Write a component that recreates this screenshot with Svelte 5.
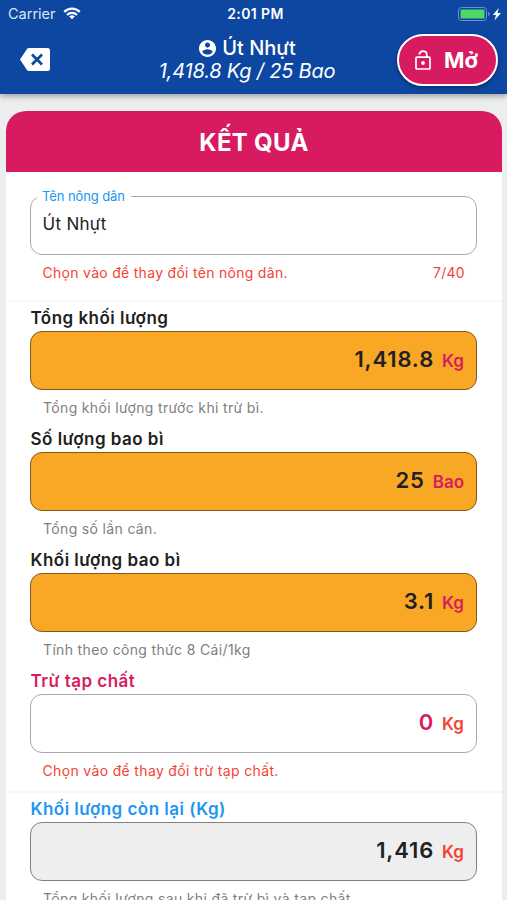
<script lang="ts">
	type Row = {
		label: string;
		value: string;
		unit: string;
		helper: string;
		kind: "amber" | "editable" | "total";
	};

	const farmer = "Út Nhựt";
	const maxLength = 40;

	const rows: Row[] = [
		{ label: "Tổng khối lượng", value: "1,418.8", unit: "Kg", helper: "Tổng khối lượng trước khi trừ bì.", kind: "amber" },
		{ label: "Số lượng bao bì", value: "25", unit: "Bao", helper: "Tổng số lần cân.", kind: "amber" },
		{ label: "Khối lượng bao bì", value: "3.1", unit: "Kg", helper: "Tính theo công thức 8 Cái/1kg", kind: "amber" },
		{ label: "Trừ tạp chất", value: "0", unit: "Kg", helper: "Chọn vào để thay đổi trừ tạp chất.", kind: "editable" },
		{ label: "Khối lượng còn lại (Kg)", value: "1,416", unit: "Kg", helper: "Tổng khối lượng sau khi đã trừ bì và tạp chất.", kind: "total" },
	];
</script>

<div class="screen">
	<header>
		<div class="status-bar">
			<div class="carrier">
				<span>Carrier</span>
				<svg width="18" height="13" viewBox="0 0 18 13" fill="none" stroke="#fff" stroke-width="2.2">
					<path d="M1.2 4.9a11 11 0 0 1 15.6 0" />
					<path d="M4 7.9a7 7 0 0 1 10 0" />
					<path d="M9 12.3 6.2 9.6a4 4 0 0 1 5.6 0z" fill="#fff" stroke="none" />
				</svg>
			</div>
			<span class="time">2:01 PM</span>
			<div class="power">
				<svg width="44" height="14" viewBox="0 0 44 14">
					<rect x=".5" y=".5" width="28" height="13" rx="3" fill="none" stroke="#6f91c8" />
					<rect x="2.5" y="2.5" width="24" height="9" rx="1.2" fill="#4cd964" />
					<path d="M30 5v4q1.7-.6 1.7-2T30 5z" fill="#6f91c8" />
					<path d="M40.8 1 34.8 7.9h3.2l-1.500 5.500 6.500-7.400h-3.500z" fill="#fff" />
				</svg>
			</div>
		</div>
		<div class="toolbar">
			<button class="back" aria-label="Xóa">
				<svg width="30" height="23" viewBox="0 0 30 23">
					<path d="M9 0h18.500Q30 0 30 2.500v18q0 2.500-2.500 2.500H9q-1.400 0-2.200-1.200L0 11.500 6.800 1.200Q7.600 0 9 0z" fill="#fff" />
					<path d="m12 6.500 10 10M22 6.500l-10 10" stroke="#0d47a1" stroke-width="2.600" />
				</svg>
			</button>
			<div class="title">
				<div class="name">
					<svg width="20" height="20" viewBox="2 2 20 20" fill="#fff">
						<path d="M12 2C6.480 2 2 6.480 2 12s4.480 10 10 10 10-4.480 10-10S17.520 2 12 2zm0 3c1.660 0 3 1.340 3 3s-1.340 3-3 3-3-1.340-3-3 1.340-3 3-3zm0 14.200c-2.500 0-4.710-1.280-6-3.220.03-1.990 4-3.080 6-3.080 1.990 0 5.970 1.090 6 3.080-1.290 1.940-3.500 3.220-6 3.220z" />
					</svg>
					<span>{farmer}</span>
				</div>
				<div class="summary">1,418.8 Kg / 25 Bao</div>
			</div>
			<button class="open">
				<svg width="16" height="20" viewBox="0 0 16 20" fill="none" stroke="#fff" stroke-width="1.7">
					<rect x="1" y="7.200" width="14" height="11.800" rx="1" />
					<path d="M4.200 4.500C4.700 2.300 6.100 1.200 8 1.200c2.200 0 3.800 1.500 3.800 3.800v2.200" />
					<circle cx="8" cy="13" r="1.900" fill="#fff" stroke="none" />
				</svg>
				<span>Mở</span>
			</button>
		</div>
	</header>

	<main>
		<h1>KẾT QUẢ</h1>
		<div class="farmer">
			<fieldset>
				<legend>Tên nông dân</legend>
				{farmer}
			</fieldset>
			<div class="hint">
				<span>Chọn vào để thay đổi tên nông dân.</span>
				<span>{farmer.length}/{maxLength}</span>
			</div>
		</div>
		{#each rows as row, i}
			{#if i === 0 || row.kind === "total"}
				<hr />
			{/if}
			<section class={row.kind}>
				<h2>{row.label}</h2>
				<div class="box">
					<span class="value">{row.value}</span>
					<span class="unit">{row.unit}</span>
				</div>
				<p>{row.helper}</p>
			</section>
		{/each}
	</main>
</div>

<style>
	:global(body) {
		background: #eceeee;
	}
	.screen {
		height: 900px;
		overflow: hidden;
		font-family: Inter, "Liberation Sans", sans-serif;
		background: #eceeee;
		color: #212121;
	}
	header {
		height: 94px;
		background: #0d47a1;
		box-shadow: 0 2px 6px rgba(0, 0, 0, 0.35);
		color: #fff;
	}
	.status-bar {
		display: grid;
		grid-template-columns: 1fr auto 1fr;
		align-items: center;
		height: 27px;
		padding: 0 5px 0 8px;
		font-size: 14.5px;
	}
	.carrier {
		display: flex;
		align-items: center;
		gap: 7px;
		color: #dde5f2;
	}
	.time {
		padding-left: 1px;
		font-size: 14px;
		font-weight: 600;
		letter-spacing: 0.4px;
	}
	.power {
		display: flex;
		justify-content: flex-end;
	}
	.toolbar {
		display: grid;
		grid-template-columns: 100px 1fr 101px;
		padding: 0 9px 0 20px;
		height: 67px;
	}
	button {
		display: flex;
		align-items: center;
		border: 0;
		padding: 0;
		background: none;
		font: inherit;
		color: #fff;
	}
	.back {
		height: 65px;
	}
	.title {
		display: flex;
		flex-direction: column;
		align-items: center;
		padding: 9px 23px 0 0;
		font-size: 20px;
		line-height: 24px;
		white-space: nowrap;
	}
	.name {
		display: flex;
		align-items: center;
		gap: 6px;
		padding-left: 1px;
		font-weight: 500;
	}
	.name svg {
		width: 17px;
		height: 17px;
	}
	.summary {
		margin-top: -1px;
		font-style: italic;
		letter-spacing: -0.2px;
	}
	.open {
		justify-content: center;
		gap: 13px;
		height: 52px;
		margin-top: 7px;
		padding-right: 2px;
		border: 2px solid #fff;
		border-radius: 26px;
		background: #d81b60;
		box-shadow: 0 2px 4px rgba(0, 0, 0, 0.35);
		font-size: 22px;
		font-weight: 700;
	}
	main {
		margin: 17px 5px 0 6px;
		background: #fff;
		border-radius: 20px 20px 0 0;
		overflow: hidden;
	}
	h1 {
		margin: 0;
		height: 61px;
		background: #d81b60;
		color: #fff;
		font-size: 24px;
		font-weight: 700;
		line-height: 63px;
		text-align: center;
		letter-spacing: 0.3px;
	}
	.farmer {
		height: 128px;
		padding: 17px 25px 0 24px;
		box-sizing: border-box;
	}
	fieldset {
		height: 66px;
		margin: 0;
		padding: 0 0 0 6px;
		box-sizing: border-box;
		border: 1.5px solid #aaa;
		border-radius: 12px;
		font-size: 17px;
		line-height: 41px;
		text-indent: 5.5px;
		letter-spacing: 0.3px;
	}
	legend {
		padding: 0 6px 0 5px;
		color: #2196f3;
		font-size: 13px;
		line-height: 15px;
		text-indent: 0;
		letter-spacing: -0.1px;
	}
	.hint {
		display: flex;
		justify-content: space-between;
		padding: 9px 12px 0 12.5px;
		color: #f44336;
		font-size: 14px;
		line-height: 18px;
		letter-spacing: 0.29px;
	}
	hr {
		height: 2px;
		margin: 0 0 5px;
		border: 0;
		background: #f7f7f7;
	}
	section {
		height: 121px;
		padding: 0 25px 0 24px;
	}
	h2 {
		margin: 0 0 2px;
		padding-left: 0.5px;
		font-size: 17px;
		font-weight: 600;
		line-height: 22px;
		letter-spacing: 0.48px;
	}
	.box {
		display: flex;
		align-items: baseline;
		justify-content: flex-end;
		gap: 8px;
		height: 59px;
		padding-right: 12px;
		box-sizing: border-box;
		border: 1.5px solid #aaa;
		border-radius: 12px;
		line-height: 54px;
		font-weight: 600;
	}
	.value {
		font-size: 22px;
		letter-spacing: 0.85px;
	}
	.unit {
		color: #f44336;
		font-size: 17px;
	}
	p {
		margin: 0;
		padding: 9px 13px 0;
		color: #808080;
		font-size: 14px;
		line-height: 18px;
		letter-spacing: 0.34px;
	}
	.amber .box {
		border-color: #80591c;
		background: #f9a825;
	}
	.amber .unit,
	.editable .value,
	.editable h2 {
		color: #d81b60;
	}
	.editable p {
		padding-left: 12.5px;
		color: #f44336;
	}
	.total h2 {
		color: #2196f3;
	}
	.total .box {
		border-color: #808080;
		background: #eee;
	}
</style>
